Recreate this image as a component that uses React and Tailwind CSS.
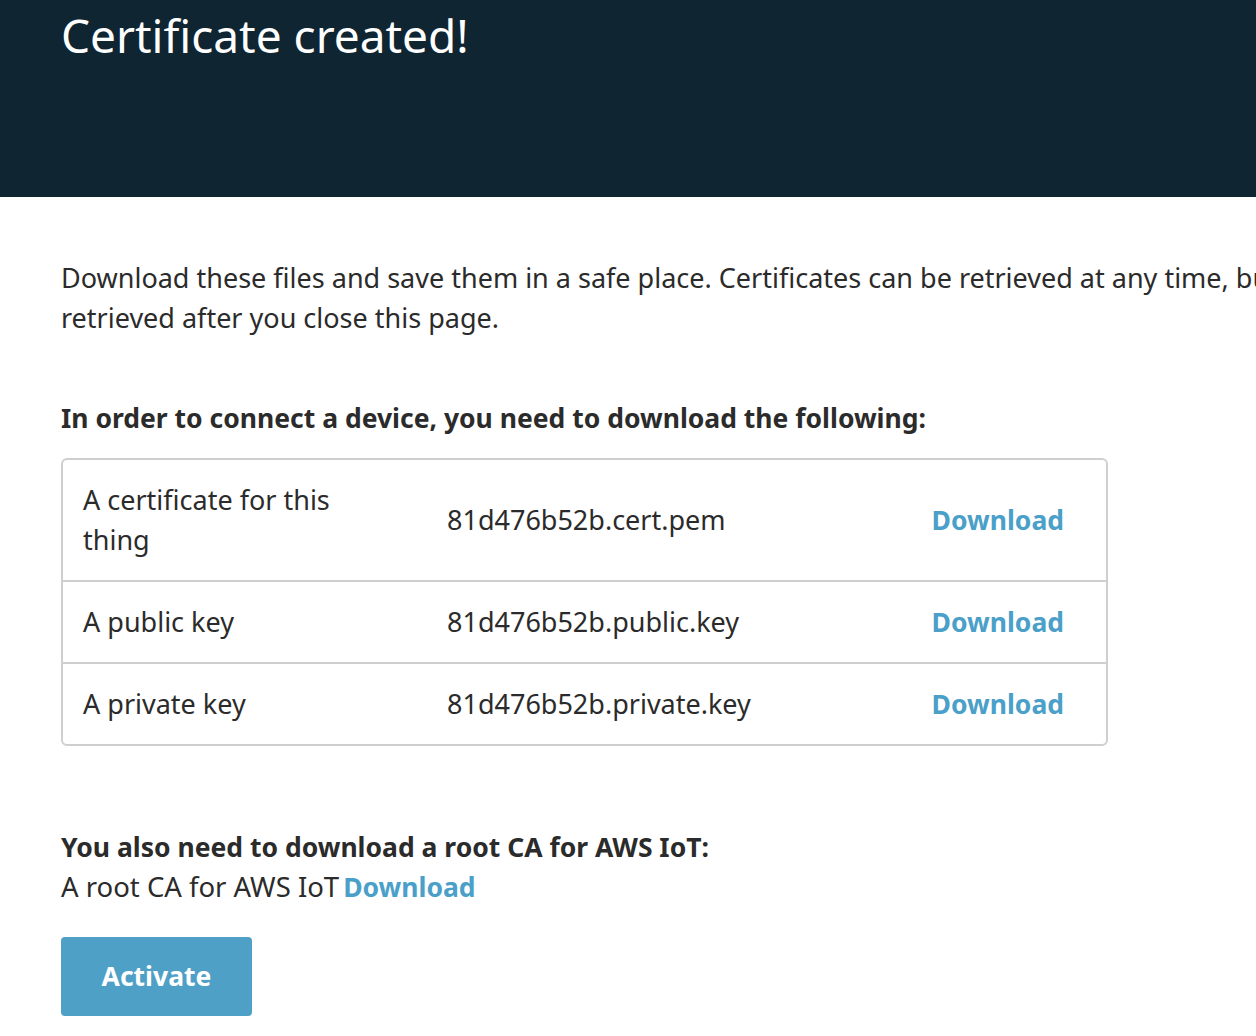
export default function App() {
  const files = [
    { label: 'A certificate for this thing', file: '81d476b52b.cert.pem', tall: true },
    { label: 'A public key', file: '81d476b52b.public.key' },
    { label: 'A private key', file: '81d476b52b.private.key' },
  ];

  return (
    <div
      className="min-h-screen w-[1256px] overflow-hidden bg-white text-[#2b2b2b]"
      style={{ fontFamily: '"Noto Sans", "Open Sans", Arial, sans-serif' }}
    >
      <div className="h-[197px] bg-[#0f2532] px-[61px]">
        <h1 className="pt-[3px] text-[46px] leading-[64px] text-white">Certificate created!</h1>
      </div>

      <div className="px-[61px]">
        <p className="mt-[61px] whitespace-nowrap text-[27px] leading-[40px]">
          Download these files and save them in a safe place. Certificates can be retrieved at any time, but the private and public keys cannot be
          <br />
          retrieved after you close this page.
        </p>

        <h2 className="mt-[60px] text-[26.5px] font-bold leading-[40px]">
          In order to connect a device, you need to download the following:
        </h2>

        <div className="mt-[20px] w-[1047px] rounded-[6px] border-2 border-[#cfcfcf]">
          {files.map((f, i) => (
            <div
              key={f.file}
              className={`flex items-center px-[20px] text-[27px] leading-[40px] ${
                i > 0 ? 'border-t-2 border-[#cfcfcf]' : ''
              } ${f.tall ? 'h-[120px]' : 'h-[82px]'}`}
            >
              <div className="w-[364px] pr-[60px]">{f.label}</div>
              <div className="flex-1">{f.file}</div>
              <a className="mr-[22px] text-[26.5px] font-bold text-[#4aa0c9]" href="#">
                Download
              </a>
            </div>
          ))}
        </div>

        <h2 className="mt-[81px] text-[26.5px] font-bold leading-[40px]">
          You also need to download a root CA for AWS IoT:
        </h2>
        <p className="text-[27.5px] leading-[40px]">
          A root CA for AWS IoT
          <a className="ml-[4px] text-[26.5px] font-bold text-[#4aa0c9]" href="#">
            Download
          </a>
        </p>

        <button className="mt-[30px] h-[79px] w-[191px] rounded-[4px] bg-[#4ea0c6] text-[26.5px] font-bold text-white">
          Activate
        </button>
      </div>
    </div>
  );
}
